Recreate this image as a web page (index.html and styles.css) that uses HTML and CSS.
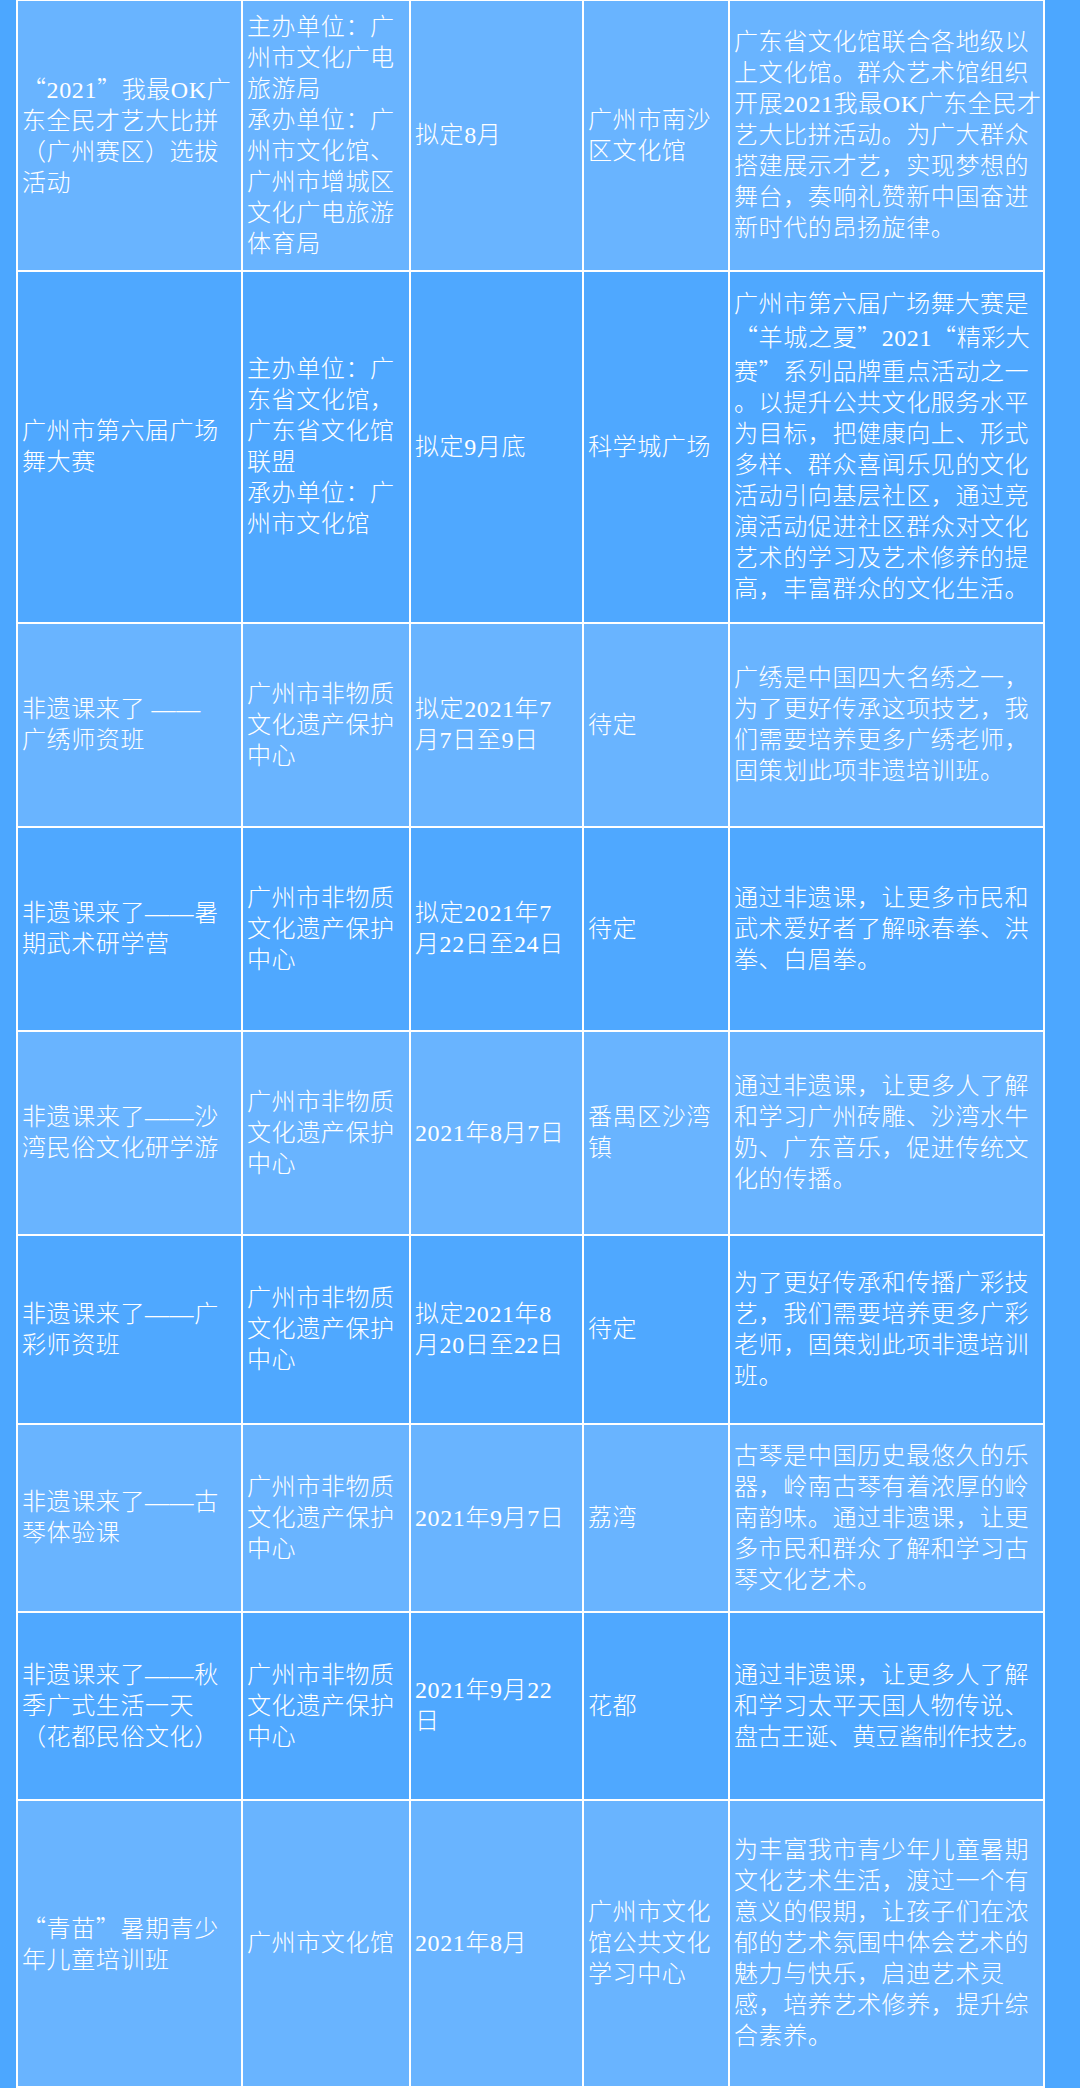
FILE: index.html
```html
<!DOCTYPE html>
<html lang="zh-CN">
<head>
<meta charset="utf-8">
<title>活动列表</title>
<link rel="stylesheet" href="styles.css">
</head>
<body>
<div class="table">
  <div class="row light r1">
    <div class="cell"><p><span class="q">“</span>2021<span class="q">”</span>我最OK广<br>东全民才艺大比拼<br>（广州赛区）选拔<br>活动</p></div>
    <div class="cell"><p>主办单位：广<br>州市文化广电<br>旅游局<br>承办单位：广<br>州市文化馆、<br>广州市增城区<br>文化广电旅游<br>体育局</p></div>
    <div class="cell"><p>拟定8月</p></div>
    <div class="cell"><p>广州市南沙<br>区文化馆</p></div>
    <div class="cell"><p>广东省文化馆联合各地级以<br>上文化馆。群众艺术馆组织<br>开展2021我最OK广东全民才<br>艺大比拼活动。为广大群众<br>搭建展示才艺，实现梦想的<br>舞台，奏响礼赞新中国奋进<br>新时代的昂扬旋律。</p></div>
  </div>
  <div class="row dark r2">
    <div class="cell"><p>广州市第六届广场<br>舞大赛</p></div>
    <div class="cell"><p>主办单位：广<br>东省文化馆，<br>广东省文化馆<br>联盟<br>承办单位：广<br>州市文化馆</p></div>
    <div class="cell"><p>拟定9月底</p></div>
    <div class="cell"><p>科学城广场</p></div>
    <div class="cell"><p>广州市第六届广场舞大赛是<br><span class="q">“</span>羊城之夏<span class="q">”</span>2021<span class="q">“</span>精彩大<br>赛<span class="q">”</span>系列品牌重点活动之一<br>。以提升公共文化服务水平<br>为目标，把健康向上、形式<br>多样、群众喜闻乐见的文化<br>活动引向基层社区，通过竞<br>演活动促进社区群众对文化<br>艺术的学习及艺术修养的提<br>高，丰富群众的文化生活。</p></div>
  </div>
  <div class="row light r3">
    <div class="cell"><p>非遗课来了 ——<br>广绣师资班</p></div>
    <div class="cell"><p>广州市非物质<br>文化遗产保护<br>中心</p></div>
    <div class="cell"><p>拟定2021年7<br>月7日至9日</p></div>
    <div class="cell"><p>待定</p></div>
    <div class="cell"><p>广绣是中国四大名绣之一，<br>为了更好传承这项技艺，我<br>们需要培养更多广绣老师，<br>固策划此项非遗培训班。</p></div>
  </div>
  <div class="row dark r4">
    <div class="cell"><p>非遗课来了——暑<br>期武术研学营</p></div>
    <div class="cell"><p>广州市非物质<br>文化遗产保护<br>中心</p></div>
    <div class="cell"><p>拟定2021年7<br>月22日至24日</p></div>
    <div class="cell"><p>待定</p></div>
    <div class="cell"><p>通过非遗课，让更多市民和<br>武术爱好者了解咏春拳、洪<br>拳、白眉拳。</p></div>
  </div>
  <div class="row light r5">
    <div class="cell"><p>非遗课来了——沙<br>湾民俗文化研学游</p></div>
    <div class="cell"><p>广州市非物质<br>文化遗产保护<br>中心</p></div>
    <div class="cell"><p>2021年8月7日</p></div>
    <div class="cell"><p>番禺区沙湾<br>镇</p></div>
    <div class="cell"><p>通过非遗课，让更多人了解<br>和学习广州砖雕、沙湾水牛<br>奶、广东音乐，促进传统文<br>化的传播。</p></div>
  </div>
  <div class="row dark r6">
    <div class="cell"><p>非遗课来了——广<br>彩师资班</p></div>
    <div class="cell"><p>广州市非物质<br>文化遗产保护<br>中心</p></div>
    <div class="cell"><p>拟定2021年8<br>月20日至22日</p></div>
    <div class="cell"><p>待定</p></div>
    <div class="cell"><p>为了更好传承和传播广彩技<br>艺，我们需要培养更多广彩<br>老师，固策划此项非遗培训<br>班。</p></div>
  </div>
  <div class="row light r7">
    <div class="cell"><p>非遗课来了——古<br>琴体验课</p></div>
    <div class="cell"><p>广州市非物质<br>文化遗产保护<br>中心</p></div>
    <div class="cell"><p>2021年9月7日</p></div>
    <div class="cell"><p>荔湾</p></div>
    <div class="cell"><p>古琴是中国历史最悠久的乐<br>器，岭南古琴有着浓厚的岭<br>南韵味。通过非遗课，让更<br>多市民和群众了解和学习古<br>琴文化艺术。</p></div>
  </div>
  <div class="row dark r8">
    <div class="cell"><p>非遗课来了——秋<br>季广式生活一天<br>（花都民俗文化）</p></div>
    <div class="cell"><p>广州市非物质<br>文化遗产保护<br>中心</p></div>
    <div class="cell"><p>2021年9月22<br>日</p></div>
    <div class="cell"><p>花都</p></div>
    <div class="cell"><p>通过非遗课，让更多人了解<br>和学习太平天国人物传说、<br><span class="tight">盘古王诞、黄豆酱制作技艺。</span></p></div>
  </div>
  <div class="row light r9">
    <div class="cell"><p><span class="q">“</span>青苗<span class="q">”</span>暑期青少<br>年儿童培训班</p></div>
    <div class="cell"><p>广州市文化馆</p></div>
    <div class="cell"><p>2021年8月</p></div>
    <div class="cell"><p>广州市文化<br>馆公共文化<br>学习中心</p></div>
    <div class="cell"><p>为丰富我市青少年儿童暑期<br>文化艺术生活，渡过一个有<br>意义的假期，让孩子们在浓<br>郁的艺术氛围中体会艺术的<br>魅力与快乐，启迪艺术灵<br>感，培养艺术修养，提升综<br>合素养。</p></div>
  </div>
</div>
</body>
</html>
```

FILE: styles.css
```css
html, body {
  margin: 0;
  padding: 0;
}

body {
  background: #4ca7ff;
  width: 1080px;
  height: 2088px;
  overflow: hidden;
  font-family: "Liberation Serif", "Noto Sans CJK SC", serif;
  font-size: 24px;
  font-weight: 300;
  letter-spacing: 0.6px;
  color: #ffffff;
}

.table {
  width: 1025px;
  margin-left: 16px;
  padding: 1px 2px 2px 2px;
  background: #ffffff;
  display: flex;
  flex-direction: column;
  gap: 2px;
}

.row {
  display: grid;
  grid-template-columns: 223px 166px 171px 144px 313px;
  gap: 2px;
}

.cell {
  display: flex;
  align-items: center;
  padding: 0 0 0 4px;
  white-space: nowrap;
}

.cell p {
  margin: 0;
  line-height: 31px;
}

.q {
  font-family: "Noto Sans CJK SC", sans-serif;
}

.tight {
  letter-spacing: -0.4px;
}

.light .cell {
  background: #69b4ff;
}

.dark .cell {
  background: #4fa8ff;
}

.r1 { height: 269px; }
.r2 { height: 350px; }
.r3 { height: 202px; }
.r4 { height: 202px; }
.r5 { height: 202px; }
.r6 { height: 187px; }
.r7 { height: 186px; }
.r8 { height: 186px; }
.r9 { height: 285px; }
```
